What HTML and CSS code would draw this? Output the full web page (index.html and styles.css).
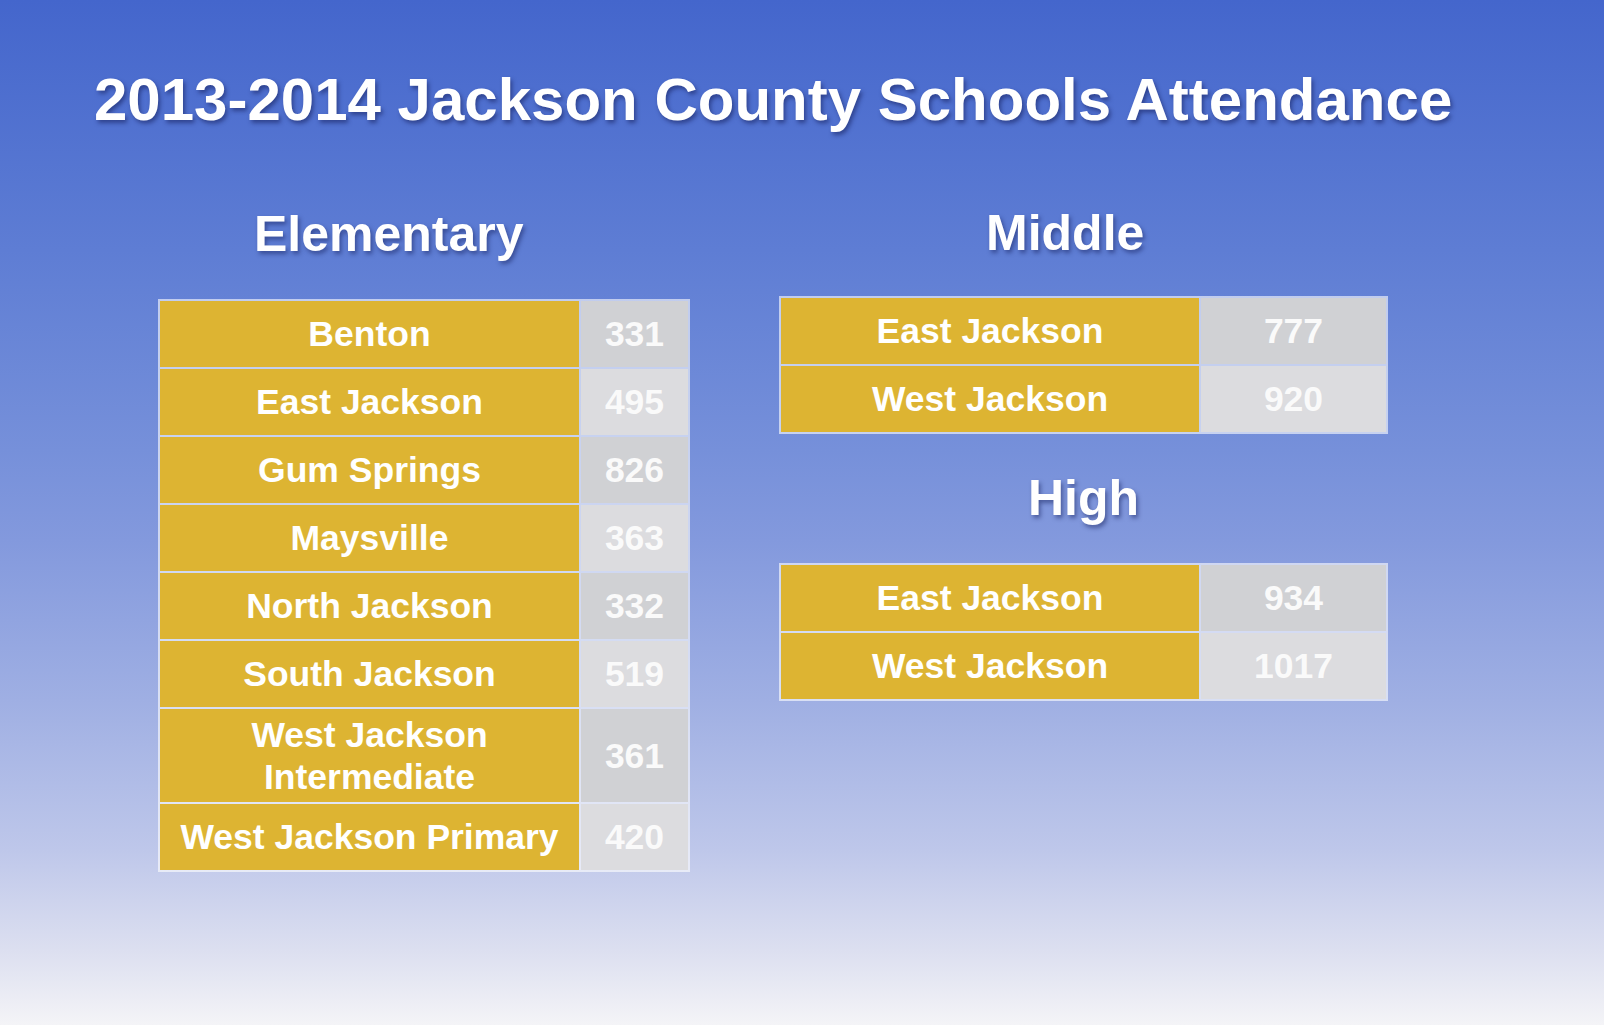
FILE: index.html
```html
<!DOCTYPE html>
<html lang="en">
<head>
<meta charset="utf-8">
<title>2013-2014 Jackson County Schools Attendance</title>
<link rel="stylesheet" href="styles.css">
</head>
<body>
<div class="slide">
  <h1 class="title">2013-2014 Jackson County Schools Attendance</h1>
  <div class="columns">
    <section class="col col-left">
      <h2 class="heading heading-elem">Elementary</h2>
      <div class="tbl tbl-elem">
        <div class="name">Benton</div><div class="num dark">331</div>
        <div class="name">East Jackson</div><div class="num light">495</div>
        <div class="name">Gum Springs</div><div class="num dark">826</div>
        <div class="name">Maysville</div><div class="num light">363</div>
        <div class="name">North Jackson</div><div class="num dark">332</div>
        <div class="name">South Jackson</div><div class="num light">519</div>
        <div class="name">West Jackson<br>Intermediate</div><div class="num dark">361</div>
        <div class="name">West Jackson Primary</div><div class="num light">420</div>
      </div>
    </section>
    <section class="col col-right">
      <h2 class="heading heading-mid">Middle</h2>
      <div class="tbl tbl-small">
        <div class="name">East Jackson</div><div class="num dark">777</div>
        <div class="name">West Jackson</div><div class="num light">920</div>
      </div>
      <h2 class="heading heading-high">High</h2>
      <div class="tbl tbl-small">
        <div class="name">East Jackson</div><div class="num dark">934</div>
        <div class="name">West Jackson</div><div class="num light">1017</div>
      </div>
    </section>
  </div>
</div>
</body>
</html>
```
FILE: styles.css
```css
html, body {
  margin: 0;
  padding: 0;
}

body {
  width: 1604px;
  height: 1025px;
  overflow: hidden;
  font-family: "Liberation Sans", Arial, Helvetica, sans-serif;
  background: linear-gradient(to bottom,
    #4466cc 0px,
    #5e7dd4 250px,
    #7690da 450px,
    #8399dd 540px,
    #9fafe3 700px,
    #bec7ea 850px,
    #dcdff0 950px,
    #f4f4f7 1025px);
}

.slide {
  width: 1604px;
  height: 1025px;
  padding-top: 70px;
  box-sizing: border-box;
}

.title {
  margin: 0;
  padding-left: 94px;
  font-size: 60px;
  line-height: 60px;
  font-weight: 700;
  color: #ffffff;
  white-space: nowrap;
  text-shadow: 2px 3px 4px rgba(20, 30, 90, 0.55);
}

.columns {
  display: flex;
  align-items: flex-start;
  margin-top: 80px;
}

.col-left {
  margin-left: 158px;
  width: 532px;
}

.col-right {
  margin-left: 89px;
  width: 609px;
}

.heading {
  margin: 0;
  font-size: 50px;
  line-height: 49px;
  font-weight: 700;
  color: #ffffff;
  white-space: nowrap;
  text-shadow: 2px 3px 4px rgba(20, 30, 90, 0.5);
}

.heading-elem {
  padding-left: 96px;
  margin-bottom: 40px;
}

.heading-mid {
  padding-left: 207px;
  margin-top: -1px;
  margin-bottom: 38px;
}

.heading-high {
  text-align: center;
  margin-top: 40px;
  margin-bottom: 40px;
}

.tbl {
  display: grid;
  gap: 2px;
  padding: 2px;
  background: rgba(255, 255, 255, 0.6);
  grid-auto-rows: 66px;
}

.tbl-elem {
  grid-template-columns: 419px 107px;
  grid-template-rows: repeat(6, 66px) 93px 66px;
}

.tbl-small {
  grid-template-columns: 418px 185px;
}

.name,
.num {
  display: flex;
  align-items: center;
  justify-content: center;
  text-align: center;
  font-size: 35.5px;
  line-height: 42px;
  font-weight: 700;
  color: #ffffff;
}

.name {
  background: #ddb432;
}

.num {
  color: #fafafa;
}

.num.dark {
  background: #d0d1d4;
}

.num.light {
  background: #dcdcdf;
}
```
